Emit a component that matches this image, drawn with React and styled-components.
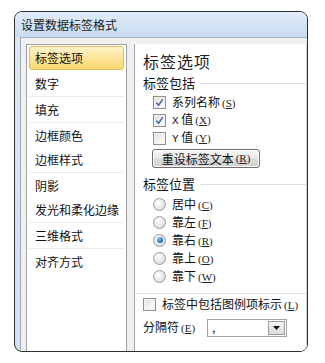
import React from "react";
import styled, { createGlobalStyle, css } from "styled-components";

const Global = createGlobalStyle`
  html, body { margin: 0; padding: 0; background: #ffffff; }
  body { font-family: "Noto Sans CJK SC", "Noto Sans", sans-serif; color: #111; }
`;

const Page = styled.div`
  padding: 11px 0 0 14px;
`;

const Window = styled.div`
  width: 292px;
  height: 339px;
  border: 1px solid #2e2e2e;
  border-radius: 8px;
  overflow: hidden;
  display: flex;
  flex-direction: column;
  background: linear-gradient(180deg, #dce9f6 0%, #cfe1f3 100%);
`;

const TitleBar = styled.div`
  height: 25px;
  flex: none;
  display: flex;
  align-items: center;
  padding-left: 6px;
  font-size: 12px;
  color: #1a1a1a;
  background: linear-gradient(180deg, #e0ecf8 0%, #c8dcf1 100%);
`;

const Body = styled.div`
  flex: 1;
  min-height: 0;
  margin-left: 5px;
  display: flex;
  gap: 7px;
  padding: 6px 0 0 5px;
  background: #f0f0f0;
  border-top: 1px solid #a9b6c4;
  border-left: 1px solid #a0acb8;
`;

const List = styled.div`
  width: 99px;
  flex: none;
  background: #ffffff;
  border: 1px solid #a0a0a0;
  border-bottom: none;
  padding-top: 1px;
  display: flex;
  flex-direction: column;
`;

const Item = styled.div`
  height: 24px;
  line-height: 24px;
  display: flex;
  align-items: center;
  padding-left: 8px;
  font-size: 12px;
  color: #111;
  ${(p) =>
    p.$selected &&
    css`
      height: 22px;
      line-height: 22px;
      margin: 0 2px 2px 2px;
      padding-left: 5px;
      border: 1px solid #dcbb63;
      border-radius: 3px;
      background: linear-gradient(180deg, #fef3c8 0%, #fde59a 50%, #fbd96e 100%);
    `}
`;

const ListSep = styled.div`
  height: 1px;
  margin: 0 2px 1px 2px;
  background: #ebebeb;
`;

const Panel = styled.div`
  flex: 1;
  background: #ffffff;
  border-left: 1px solid #a8a8a8;
  border-right: 1px solid #d4d4d4;
  padding-left: 8px;
  display: flex;
  flex-direction: column;
`;

const Header = styled.div`
  margin-top: 7px;
  height: 21px;
  line-height: 21px;
  font-size: 16px;
  letter-spacing: 1px;
  color: #1e1e1e;
`;

const GroupTitle = styled.div`
  height: 16px;
  line-height: 16px;
  display: flex;
  align-items: center;
  font-size: 13px;
  color: #111;
  margin-top: ${(p) => p.$top || 0}px;
  &::after {
    content: "";
    flex: 1;
    height: 1px;
    margin-left: 5px;
    background: #d9e0e6;
  }
`;

const Options = styled.div`
  margin-top: ${(p) => p.$top || 0}px;
  padding-left: ${(p) => (p.$indent ? 10 : 0)}px;
  display: flex;
  flex-direction: column;
`;

const Row = styled.label`
  height: ${(p) => p.$h || 18}px;
  line-height: 18px;
  display: flex;
  align-items: center;
  gap: 6px;
  font-size: 12px;
  color: #111;
`;

const Box = styled.span`
  width: 11px;
  height: 11px;
  flex: none;
  border: 1px solid #8f8f8f;
  background: linear-gradient(135deg, #dcdcdc 0%, #f4f4f4 60%, #ffffff 100%);
  box-shadow: inset 0 0 0 1px #f4f4f4;
  display: flex;
  align-items: center;
  justify-content: center;
`;

const RadioDot = styled.span`
  width: 11px;
  height: 11px;
  flex: none;
  border-radius: 50%;
  border: 1px solid #9a9a9a;
  background: radial-gradient(circle at 40% 35%, #ffffff 0%, #e6e6e6 55%, #cfcfcf 100%);
  display: flex;
  align-items: center;
  justify-content: center;
  &::after {
    content: "";
    display: ${(p) => (p.$on ? "block" : "none")};
    width: 6px;
    height: 6px;
    border-radius: 50%;
    background: radial-gradient(circle at 35% 30%, #8fc7f0 0%, #2a74b8 60%, #174f86 100%);
  }
`;

const Key = styled.span`
  font-size: 11px;
  font-family: "Liberation Serif", "DejaVu Serif", serif;
  color: #222;
  margin-left: 2px;
  & u { text-underline-offset: 1px; }
`;

const Mono = styled.span`
  font-family: "Liberation Mono", monospace;
  font-size: 11px;
`;

const Button = styled.div`
  width: 106px;
  height: 17px;
  line-height: 17px;
  margin: 2px 0 0 9px;
  border: 1px solid #707070;
  border-radius: 3px;
  background: linear-gradient(180deg, #f6f6f6 0%, #e9e9e9 48%, #dcdcdc 52%, #d0d0d0 100%);
  box-shadow: inset 0 0 0 1px #fbfbfb;
  display: flex;
  align-items: center;
  justify-content: center;
  font-size: 12px;
  color: #111;
`;

const Divider = styled.div`
  height: 1px;
  margin-top: 8px;
  margin-left: -8px;
  background: #d9e0e6;
`;

const SelectRow = styled.div`
  height: 19px;
  line-height: 19px;
  margin-top: 5px;
  display: flex;
  align-items: center;
  font-size: 12px;
  color: #111;
`;

const Select = styled.div`
  width: 78px;
  height: 16px;
  margin-left: 12px;
  border: 1px solid #a5a5a5;
  display: flex;
  align-items: stretch;
  background: #fff;
`;

const SelectValue = styled.div`
  flex: 1;
  padding-left: 4px;
  font-size: 12px;
  line-height: 14px;
`;

const Drop = styled.div`
  width: 15px;
  margin: 1px;
  border: 1px solid #9a9a9a;
  background: linear-gradient(180deg, #f4f4f4 0%, #dcdcdc 100%);
  display: flex;
  align-items: center;
  justify-content: center;
`;

const Check = () => (
  <svg width="9" height="9" viewBox="0 0 9 9">
    <path d="M1.2 4.6 L3.6 7.2 L7.8 1.2" fill="none" stroke="#4a6fa5" strokeWidth="1.6" />
  </svg>
);

const K = ({ c }) => (
  <Key>
    (<u>{c}</u>)
  </Key>
);

const groups = [
  ["标签选项", "数字"],
  ["填充"],
  ["边框颜色", "边框样式"],
  ["阴影", "发光和柔化边缘"],
  ["三维格式"],
  ["对齐方式"],
];

const radios = [
  ["居中", "C", false],
  ["靠左", "F", false],
  ["靠右", "R", true],
  ["靠上", "O", false],
  ["靠下", "W", false],
];

export default function App() {
  return (
    <>
      <Global />
      <Page>
        <Window>
          <TitleBar>设置数据标签格式</TitleBar>
          <Body>
            <List>
              {groups.map((g, gi) => (
                <React.Fragment key={gi}>
                  {g.map((t) => (
                    <Item key={t} $selected={t === "标签选项"}>
                      {t}
                    </Item>
                  ))}
                  {gi < groups.length - 1 && <ListSep />}
                </React.Fragment>
              ))}
            </List>
            <Panel>
              <Header>标签选项</Header>
              <GroupTitle $top={3}>标签包括</GroupTitle>
              <Options $top={2} $indent>
                <Row>
                  <Box><Check /></Box>
                  <span>系列名称<K c="S" /></span>
                </Row>
                <Row>
                  <Box><Check /></Box>
                  <span><Mono>X</Mono> 值<K c="X" /></span>
                </Row>
                <Row>
                  <Box />
                  <span><Mono>Y</Mono> 值<K c="Y" /></span>
                </Row>
              </Options>
              <Button>重设标签文本<K c="R" /></Button>
              <GroupTitle $top={8}>标签位置</GroupTitle>
              <Options $top={3} $indent>
                {radios.map(([t, k, on]) => (
                  <Row key={t}>
                    <RadioDot $on={on} />
                    <span>{t}<K c={k} /></span>
                  </Row>
                ))}
              </Options>
              <Divider />
              <Options $top={1}>
                <Row>
                  <Box />
                  <span>标签中包括图例项标示<K c="L" /></span>
                </Row>
              </Options>
              <SelectRow>
                <span>分隔符<K c="E" /></span>
                <Select>
                  <SelectValue>,</SelectValue>
                  <Drop>
                    <svg width="7" height="4" viewBox="0 0 7 4">
                      <path d="M0 0 H7 L3.5 4 Z" fill="#111" />
                    </svg>
                  </Drop>
                </Select>
              </SelectRow>
            </Panel>
          </Body>
        </Window>
      </Page>
    </>
  );
}
